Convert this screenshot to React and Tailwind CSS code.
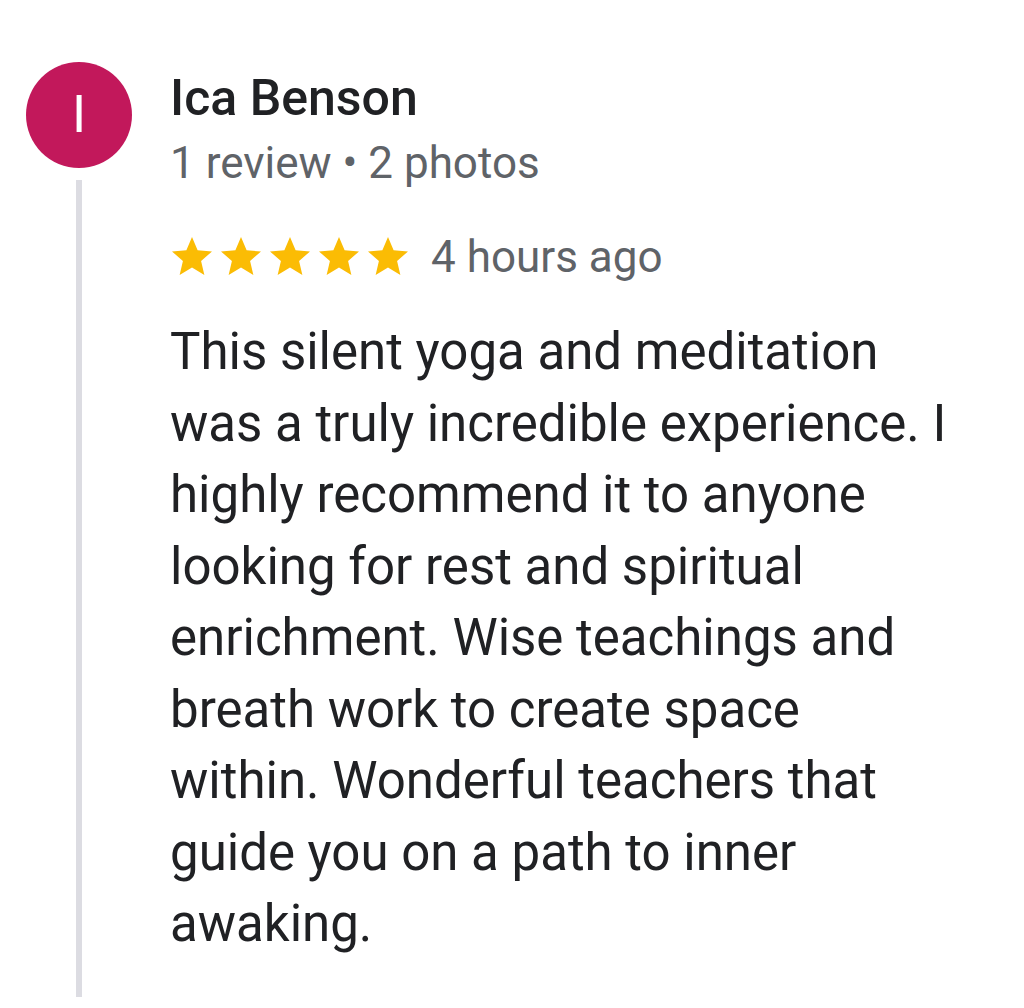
function Stars({ count }) {
    return (
        <div className="flex items-center gap-[1px]">
            {Array.from({ length: count }).map((_, i) => (
                <svg key={i} viewBox="0 0 24 24" className="w-[48px] h-[48px] fill-[#fbbc04]">
                    <path d="M12 17.27L18.18 21l-1.64-7.03L22 9.24l-7.19-.61L12 2 9.19 8.63 2 9.24l5.46 4.73L5.82 21z" />
                </svg>
            ))}
        </div>
    );
}

export default function App() {
    const review = {
        name: 'Ica Benson',
        meta: '1 review \u2022 2 photos',
        time: '4 hours ago',
        body: 'This silent yoga and meditation was a truly incredible experience. I highly recommend it to anyone looking for rest and spiritual enrichment. Wise teachings and breath work to create space within. Wonderful teachers that guide you on a path to inner awaking.',
    };

    return (
        <div className="w-[1024px] h-[1008px] bg-white overflow-hidden font-['Roboto',sans-serif]">
            <div className="flex gap-[38px] pl-[26px] pt-[62px]">
                {/* avatar + thread line */}
                <div className="flex flex-col items-center w-[106px] shrink-0">
                    <div className="w-[106px] h-[106px] rounded-full bg-[#c2185b] flex items-center justify-center text-white text-[52px] leading-none">
                        I
                    </div>
                    <div className="w-[6px] h-[817px] mt-[12px] bg-[#dcdce2]" />
                </div>

                <div className="w-[784px]">
                    <div className="mt-[6px] text-[50px] leading-[60px] font-medium text-[#202124]">{review.name}</div>
                    <div className="mt-[9px] text-[44px] leading-[52px] text-[#5f6368]">{review.meta}</div>
                    <div className="flex items-center gap-[19px] mt-[42px] -ml-[2px]">
                        <Stars count={5} />
                        <span className="text-[44px] leading-[52px] text-[#5f6368]">{review.time}</span>
                    </div>
                    <p className="mt-[33px] text-[51px] leading-[71.5px] text-[#202124]">{review.body}</p>
                </div>
            </div>
        </div>
    );
}
